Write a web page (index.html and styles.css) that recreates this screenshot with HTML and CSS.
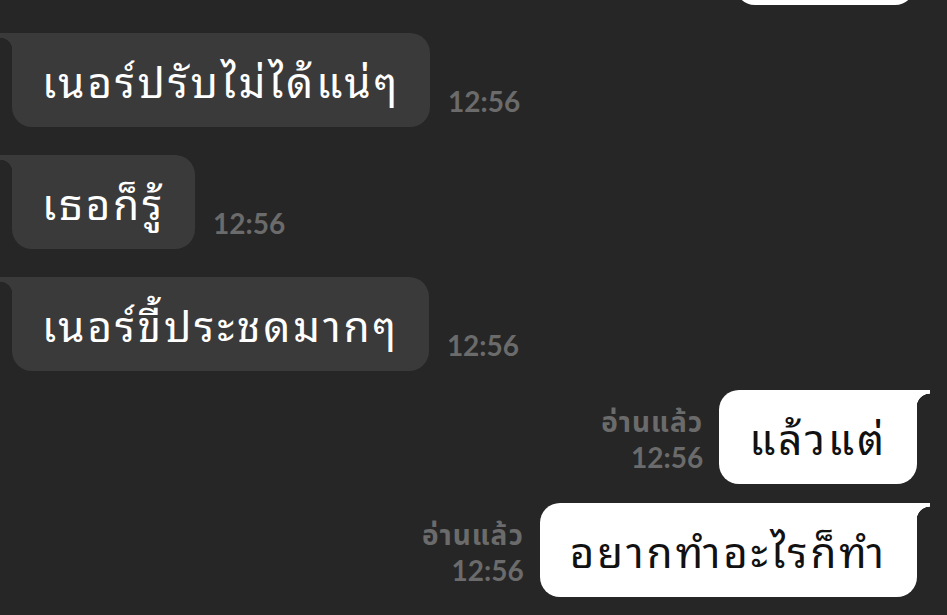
FILE: index.html
```html
<!DOCTYPE html>
<html lang="th">
<head>
<meta charset="utf-8">
<link rel="stylesheet" href="styles.css">
</head>
<body>
<div class="chat">
  <div class="row sent">
    <div class="bubble out partial"></div>
  </div>
  <div class="row recv">
    <div class="bubble in">เนอร์ปรับไม่ได้แน่ๆ</div>
    <div class="time">12:56</div>
  </div>
  <div class="row recv">
    <div class="bubble in">เธอก็รู้</div>
    <div class="time">12:56</div>
  </div>
  <div class="row recv">
    <div class="bubble in">เนอร์ขี้ประชดมากๆ</div>
    <div class="time">12:56</div>
  </div>
  <div class="row sent">
    <div class="meta"><span class="read">อ่านแล้ว</span><span>12:56</span></div>
    <div class="bubble out">แล้วแต่</div>
  </div>
  <div class="row sent">
    <div class="meta"><span class="read">อ่านแล้ว</span><span>12:56</span></div>
    <div class="bubble out">อยากทำอะไรก็ทำ</div>
  </div>
</div>
</body>
</html>
```
FILE: styles.css
```css
html, body {
  margin: 0;
  padding: 0;
  background: #262626;
  overflow: hidden;
}
body {
  width: 947px;
  height: 615px;
  font-family: "Noto Sans Thai Looped", "Noto Sans Thai", "Noto Sans", sans-serif;
}
.chat {
  display: flex;
  flex-direction: column;
  margin-top: -89px;
  padding: 0 30px 0 12px;
}
.row {
  display: flex;
  align-items: flex-end;
}
.row.recv {
  margin-top: 28px;
}
.row.sent {
  justify-content: flex-end;
  margin-top: 19px;
}
.row.sent:first-child {
  margin-top: 0;
}
.bubble {
  position: relative;
  box-sizing: border-box;
  height: 94px;
  display: flex;
  align-items: center;
  padding: 0 30px 2px 30px;
  font-size: 42px;
  letter-spacing: 3px;
  white-space: nowrap;
  border-radius: 20px;
}
.bubble.in {
  background: #3a3a3a;
  color: #ffffff;
  border-top-left-radius: 0;
}
.bubble.in::before {
  content: "";
  position: absolute;
  left: -12px;
  top: 0;
  width: 12px;
  height: 17px;
  background: radial-gradient(circle at 0 100%, transparent 12px, #3a3a3a 12.6px);
}
.bubble.out {
  background: #ffffff;
  color: #111111;
  border-top-right-radius: 0;
}
.bubble.partial {
  width: 180px;
  margin-right: 2px;
  border-top-right-radius: 20px;
}
.bubble.partial::after {
  display: none;
}
.bubble.out::after {
  content: "";
  position: absolute;
  right: -13px;
  top: 0;
  width: 13px;
  height: 17px;
  background: radial-gradient(circle at 100% 100%, transparent 13px, #ffffff 13.6px);
}
.time {
  margin: 0 0 12px 18px;
  color: #6b6b6b;
  font-family: "Lato", "Noto Sans Thai", sans-serif;
  font-weight: 700;
  font-size: 28px;
  line-height: 28px;
}
.meta {
  display: flex;
  flex-direction: column;
  align-items: flex-end;
  margin: 0 16px 9px 0;
  color: #6b6b6b;
  font-family: "Lato", "Noto Sans Thai", sans-serif;
  font-weight: 700;
  font-size: 28px;
  line-height: 36px;
}
.meta .read {
  letter-spacing: 1px;
}
```
